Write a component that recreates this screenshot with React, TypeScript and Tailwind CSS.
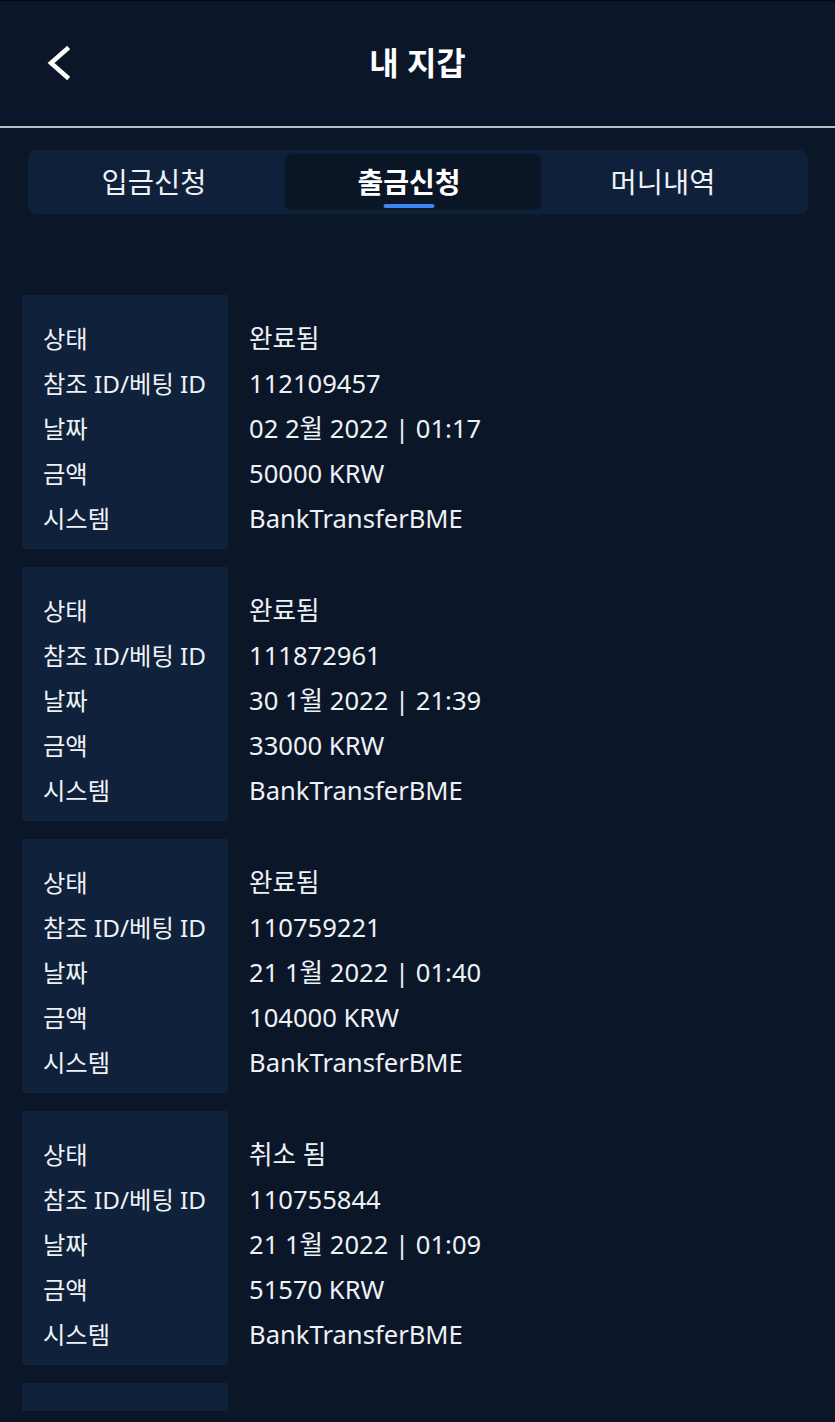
import React from "react";

type Row = { status: string; id: string; date: string; amount: string; system: string };

const rows: Row[] = [
  { status: "완료됨", id: "112109457", date: "02 2월 2022 | 01:17", amount: "50000 KRW", system: "BankTransferBME" },
  { status: "완료됨", id: "111872961", date: "30 1월 2022 | 21:39", amount: "33000 KRW", system: "BankTransferBME" },
  { status: "완료됨", id: "110759221", date: "21 1월 2022 | 01:40", amount: "104000 KRW", system: "BankTransferBME" },
  { status: "취소 됨", id: "110755844", date: "21 1월 2022 | 01:09", amount: "51570 KRW", system: "BankTransferBME" },
];

const labels = ["상태", "참조 ID/베팅 ID", "날짜", "금액", "시스템"];

function Card({ r }: { r: Row }) {
  const values = [r.status, r.id, r.date, r.amount, r.system];
  return (
    <div className="flex">
      <div className="w-[206px] shrink-0 bg-[#0f213b] pt-[22px] pb-[7px] pl-[21px] text-[24.3px]">
        {labels.map((l) => (
          <div key={l} className="h-[45px] flex items-center whitespace-nowrap">{l}</div>
        ))}
      </div>
      <div className="pt-[22px] pb-[7px] pl-[21px] text-[25.6px]">
        {values.map((v, i) => (
          <div key={i} className="h-[45px] flex items-center whitespace-nowrap">{v}</div>
        ))}
      </div>
    </div>
  );
}

export default function App() {
  return (
    <div
      className="w-[835px] h-[1422px] overflow-hidden bg-[#0b1628] text-[#eef1f5]"
      style={{ fontFamily: '"Noto Sans", "Noto Sans CJK KR", sans-serif' }}
    >
      <div className="h-px bg-[#04080f]" />
      <header className="relative h-[125px] flex items-center justify-center">
        <svg
          className="absolute left-[46px] top-[44px]"
          width="28"
          height="36"
          viewBox="0 0 28 36"
          fill="none"
          stroke="#ffffff"
          strokeWidth="4.5"
          strokeLinecap="square"
        >
          <polyline points="21,4 5,18 21,32" />
        </svg>
        <h1 className="text-[32px] font-bold text-white leading-none mt-[-1px]">내 지갑</h1>
      </header>
      <div className="h-[2px] bg-[#b9bec4]" />
      <div className="pl-[28px] pr-[27px] pt-[22px]">
        <div className="h-[64px] rounded-[8px] bg-[#0f203a] p-[4px] flex">
          <div className="w-[253px] shrink-0 flex items-center justify-center pr-[9px] text-[28.5px] text-[#eef1f5]">입금신청</div>
          <div className="w-[256px] shrink-0 flex items-center justify-center pr-[8px] rounded-[7px] bg-[#0a1526] text-[28px] font-bold text-white">
            <span className="relative">
              출금신청
              <span className="absolute top-[43px] left-1/2 -translate-x-1/2 w-[51px] h-[4px] rounded-full bg-[#3c85f4]" />
            </span>
          </div>
          <div className="flex-1 flex items-center justify-center pr-[19px] text-[28.5px] text-[#eef1f5]">머니내역</div>
        </div>
      </div>
      <div className="pl-[22px] pt-[81px] flex flex-col gap-[18px]">
        {rows.map((r, i) => (
          <Card key={i} r={r} />
        ))}
        <div className="w-[206px] h-[28px] bg-[#0f213b]" />
      </div>
    </div>
  );
}
